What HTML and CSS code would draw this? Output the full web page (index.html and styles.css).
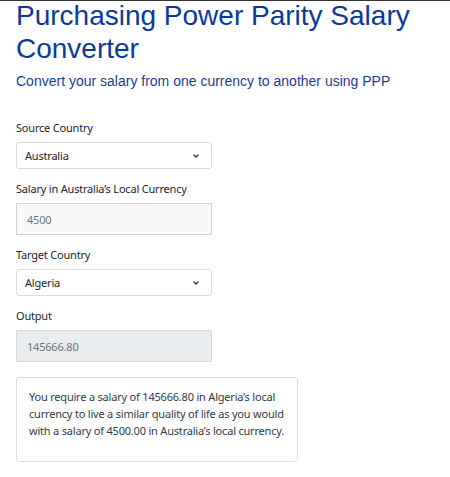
FILE: index.html
```html
<!DOCTYPE html>
<html>
<head>
<meta charset="utf-8">
<link rel="stylesheet" href="styles.css">
</head>
<body>
<div class="page">
  <h1 class="title">Purchasing Power Parity Salary Converter</h1>
  <p class="subtitle">Convert your salary from one currency to another using PPP</p>
  <form class="form">
    <div class="field">
      <label class="label">Source Country</label>
      <div class="select">
        <span>Australia</span>
        <svg class="chev" width="8" height="6" viewBox="0 0 8 6"><path d="M1.5 1.5 L4 4 L6.5 1.5" fill="none" stroke="#343a40" stroke-width="1.3"/></svg>
      </div>
    </div>
    <div class="field">
      <label class="label">Salary in Australia’s Local Currency</label>
      <div class="input hatched">4500</div>
    </div>
    <div class="field">
      <label class="label">Target Country</label>
      <div class="select">
        <span>Algeria</span>
        <svg class="chev" width="8" height="6" viewBox="0 0 8 6"><path d="M1.5 1.5 L4 4 L6.5 1.5" fill="none" stroke="#343a40" stroke-width="1.3"/></svg>
      </div>
    </div>
    <div class="field">
      <label class="label">Output</label>
      <div class="input disabled">145666.80</div>
    </div>
  </form>
  <div class="result">
    <p>You require a salary of 145666.80 in Algeria’s local currency to live a similar quality of life as you would with a salary of 4500.00 in Australia’s local currency.</p>
  </div>
</div>
</body>
</html>
```
FILE: styles.css
```css
html, body { margin: 0; padding: 0; background: #fff; }
body { border-top: 1px solid #333; }
.page { padding: 0 16px; }
.title {
  font-family: "Liberation Sans", Arial, sans-serif;
  font-weight: normal;
  font-size: 28px;
  line-height: 33px;
  color: #0b3a9c;
  margin: -2px 0 0 0;
  width: 420px;
}
.subtitle {
  font-family: "Liberation Sans", Arial, sans-serif;
  font-size: 14px;
  line-height: 18px;
  color: #1c3d8f;
  margin: 7px 0 0 0;
}
.form { margin-top: 30px; width: 196px; display: flex; flex-direction: column; gap: 12px; }
.field { display: flex; flex-direction: column; gap: 7px; }
.label {
  font-family: "Noto Sans", sans-serif;
  font-size: 11px;
  line-height: 15px;
  letter-spacing: -0.2px;
  color: #212529;
}
.select, .input {
  box-sizing: border-box;
  font-family: "Noto Sans", sans-serif;
  font-size: 11px;
  letter-spacing: -0.2px;
  color: #212529;
  border: 1px solid #d8dbe0;
  border-radius: 3px;
  display: flex;
  align-items: center;
}
.select { height: 27px; padding: 0 11px 0 8px; justify-content: space-between; }
.input { height: 32px; padding: 0 10px; color: #6c757d; }
.hatched {
  background: #f9f9f9;
  border-color: #d4d4d4;
  border-radius: 0;
}
.disabled { background: #e9ecef; border-color: #d6d8db; border-radius: 0; }
.result {
  margin-top: 15px;
  width: 282px;
  box-sizing: border-box;
  border: 1px solid #dcdcdc;
  border-radius: 3px;
  padding: 10px 10px 22px 12px;
}
.result p {
  margin: 0;
  font-family: "Noto Sans", sans-serif;
  font-size: 11px;
  line-height: 17px;
  letter-spacing: -0.2px;
  color: #343a40;
}
```
